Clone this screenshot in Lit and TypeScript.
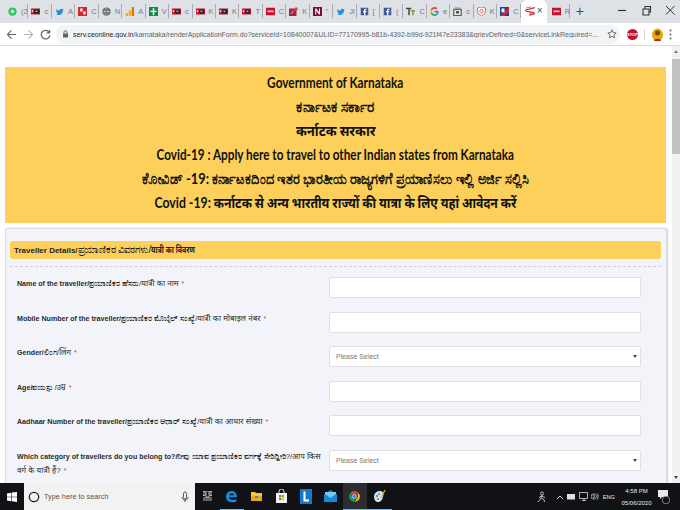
import { LitElement, html, css, svg } from 'lit';
import { customElement } from 'lit/decorators.js';

const toi = svg`<rect x="0" y="2" width="12" height="8" fill="#c8102e"/><rect x="4" y="3.500" width="7" height="5" fill="#222"/><rect x="1" y="4" width="2" height="3" fill="#f3c9c9"/><rect x="6" y="5" width="2.500" height="1.500" fill="#ddd"/>`;
const fb = svg`<rect x="1" y="1" width="10" height="10" fill="#3b5998"/><path d="M7 11V7h1.500l.3-1.600H7V4.500c0-.5.2-.8.8-.8h1V2.300H7.500C6 2.300 5.300 3.200 5.300 4.400v1H4V7h1.300v4z" fill="#fff"/>`;
const tw = svg`<path d="M11.500 3.200c-.4.200-.8.300-1.200.3.400-.3.800-.7.900-1.100-.4.200-.8.400-1.300.5C9.400 2.400 8.800 2.200 8.200 2.200c-1.200 0-2.100 1-2.100 2.100l.1.500C4.500 4.700 2.900 3.900 1.900 2.600c-.6 1-.3 2.200.6 2.800-.3 0-.7-.1-1-.3 0 1 .7 1.900 1.700 2.100-.3.100-.6.100-.9.100.3.800 1 1.400 2 1.400C3.500 9.400 2.400 9.800 1.300 9.700 5.200 12 10.600 10 10.600 4.600c.4-.3.700-.9.900-1.400z" fill="#1d8fe0"/>`;

const tabIcons: Record<string, unknown> = {
  wa: svg`<circle cx="6" cy="6" r="5.500" fill="#25c35c"/><circle cx="6" cy="6" r="2.600" fill="#bfeccd"/>`,
  toi,
  tw,
  dh: svg`<rect x="0" y="0" width="12" height="12" fill="#d6262c"/><path d="M3 2h3v4H3zM7 6h3v4H7z" fill="#fff"/>`,
  globe: svg`<circle cx="6" cy="6" r="5.500" fill="#5f6368"/><path d="M1 6h10M6 1c-3 3-3 7 0 10M6 1c3 3 3 7 0 10" stroke="#dee1e6" fill="none" stroke-width=".8"/>`,
  an: svg`<rect x="1" y="8" width="3" height="4" fill="#f9ab00"/><rect x="5" y="4.500" width="3" height="7.500" fill="#f9ab00"/><rect x="9" y="0" width="3" height="12" fill="#e37400"/>`,
  cr: svg`<rect x="0" y="0" width="12" height="12" fill="#128a45"/><path d="M5 1.500h2V5h3v1.800H7V11H5V6.800H2V5h3z" fill="#fff"/>`,
  tnm: svg`<rect x="0" y="1" width="12" height="10" fill="#c8102e"/><rect x="2" y="4.500" width="8" height="2.500" fill="#f3b9b9"/>`,
  pin: svg`<rect x="0" y="2" width="10" height="10" fill="#a5243a"/><circle cx="9.500" cy="2.500" r="2.300" fill="#e8453c"/><path d="M2.500 9l4-4" stroke="#fff"/>`,
  nn: svg`<rect x="0" y="0" width="12" height="12" fill="#7a1030"/><path d="M3 10V2h1.300L8 7V2h1.300v8H8L4.300 5v5z" fill="#fff"/>`,
  fb,
  tt: svg`<path d="M0 1h7v2H5v8H3V3H0z" fill="#4a4a3a"/><path d="M6.500 4H12v2h-1.700v5H8.300V6H6.500z" fill="#8a9a3a"/>`,
  g: svg`<path d="M11.500 6.200c0-.4 0-.8-.1-1.200H6v2.200h3.100c-.1.700-.5 1.300-1.100 1.700v1.400h1.800c1.100-1 1.700-2.500 1.700-4.100z" fill="#4285f4"/><path d="M6 12c1.500 0 2.800-.5 3.800-1.400L8 9.200c-.5.300-1.200.5-2 .5-1.500 0-2.700-1-3.200-2.300H.9v1.400C1.900 10.700 3.800 12 6 12z" fill="#34a853"/><path d="M2.800 7.400c-.2-.9-.2-1.800 0-2.700V3.300H.9c-.8 1.700-.8 3.800 0 5.500z" fill="#fbbc05"/><path d="M6 2.400c.9 0 1.600.3 2.200.8l1.600-1.600C8.800.7 7.500 0 6 0 3.800 0 1.900 1.300.9 3.300l1.900 1.400C3.300 3.400 4.500 2.400 6 2.400z" fill="#ea4335"/>`,
  box: svg`<rect x="1" y="3" width="10" height="8.500" fill="none" stroke="#4a4f2a" stroke-width="1.300"/><rect x="4" y="5.500" width="4" height="3" fill="#4a4f2a"/><path d="M4 0v3M8 0v3" stroke="#4a4f2a"/>`,
  sh: svg`<path d="M6 0l5.500 1.500L11 8l-5 4-5-4-.5-6.500z" fill="#fff" stroke="#e0453a"/><circle cx="6" cy="5.500" r="2.300" fill="none" stroke="#e0453a"/>`,
  rb: svg`<rect x="0" y="0" width="12" height="12" fill="#1d3f94"/><path d="M0 12L12 0v6L6 12z" fill="#d8232a"/><rect x="2" y="2" width="4" height="5" fill="#fff"/>`,
  s: svg`<path d="M12 2L2 4.500c-1.500.5-1 1.500 0 1.800L10 8c1.500.4 1.500 1.500 0 1.800L5 11" fill="none" stroke="#d8232a" stroke-width="1.500"/><path d="M1 2.500L8 1M5 8.500l3 .5" stroke="#d8232a" stroke-width=".8"/>`,
};

const tabs: [string, string][] = [
  ['wa', '(2'], ['toi', 'c'], ['tw', 'A'], ['dh', 'C'], ['globe', 'N'], ['an', 'A'], ['cr', 'V'],
  ['toi', 'c'], ['toi', 'K'], ['toi', 'K'], ['toi', 'T'], ['tnm', 'C'], ['pin', 'K'], ['nn', '"'],
  ['tw', 'Ji'], ['fb', '['], ['fb', '('], ['tt', 'C'], ['g', 'e'], ['box', 'c'], ['sh', 'K'], ['rb', 'C'],
];

// scale squeezes each line to the narrower face the original page uses
const bannerLines: { text: string; scale: number }[] = [
  { text: 'Government of Karnataka', scale: 0.79 },
  { text: 'ಕರ್ನಾಟಕ ಸರ್ಕಾರ', scale: 0.92 },
  { text: 'कर्नाटक सरकार', scale: 0.87 },
  { text: 'Covid-19 : Apply here to travel to other Indian states from Karnataka', scale: 0.783 },
  { text: 'ಕೋವಿಡ್ -19: ಕರ್ನಾಟಕದಿಂದ ಇತರ ಭಾರತೀಯ ರಾಜ್ಯಗಳಿಗೆ ಪ್ರಯಾಣಿಸಲು ಇಲ್ಲಿ ಅರ್ಜಿ ಸಲ್ಲಿಸಿ', scale: 0.86 },
  { text: 'Covid -19: कर्नाटक से अन्य भारतीय राज्यों की यात्रा के लिए यहां आवेदन करें', scale: 0.817 },
];

const fields: { en: string; kn: string; hi: string; kind: 'input' | 'select' }[] = [
  { en: 'Name of the traveller/', kn: 'ಪ್ರಯಾಣಿಕರ ಹೆಸರು/', hi: 'यात्री का नाम', kind: 'input' },
  { en: 'Mobile Number of the traveller/', kn: 'ಪ್ರಯಾಣಿಕರ ಮೊಬೈಲ್ ಸಂಖ್ಯೆ/', hi: 'यात्री का मोबाइल नंबर', kind: 'input' },
  { en: 'Gender/', kn: 'ಲಿಂಗ/', hi: 'लिंग', kind: 'select' },
  { en: 'Age/', kn: 'ವಯಸ್ಸು/', hi: 'उम्र', kind: 'input' },
  { en: 'Aadhaar Number of the traveller/', kn: 'ಪ್ರಯಾಣಿಕರ ಆಧಾರ್ ಸಂಖ್ಯೆ/', hi: 'यात्री का आधार संख्या', kind: 'input' },
  { en: 'Which category of travellers do you belong to?/', kn: 'ನೀವು ಯಾವ ಪ್ರಯಾಣಿಕರ ವರ್ಗಕ್ಕೆ ಸೇರಿದ್ದೀರಿ?/', hi: 'आप किस वर्ग के यात्री हैं?', kind: 'select' },
];

@customElement('app-root')
export class AppRoot extends LitElement {
  static styles = css`
    :host {
      display: flex;
      flex-direction: column;
      width: 680px;
      height: 510px;
      overflow: hidden;
      background: #fff;
      font-family: 'Liberation Sans', 'Noto Sans', sans-serif;
    }

    .tabbar {
      height: 23px;
      flex: none;
      display: flex;
      background: #dee1e6;
      padding-left: 5px;
      color: #777a80;
    }
    .tab {
      width: 23.45px;
      flex: none;
      box-sizing: border-box;
      padding: 3px 0 0 3px;
      display: flex;
      gap: 4px;
      font-size: 7.500px;
      line-height: 9px;
      border-right: 1px solid #a9adb3;
      height: 14px;
      margin-top: 4px;
    }
    .tab svg { flex: none; width: 9px; height: 9px; margin-top: 0; }
    .tab.active {
      background: #fff;
      border: 0;
      height: 23px;
      margin-top: 0;
      width: 26px;
      padding: 6px 0 0 4px;
      border-radius: 6px 6px 0 0;
      gap: 2px;
      color: #444;
      font-size: 10px;
    }
    .tab.active svg { width: 10px; height: 10px; }
    .tab.last { margin-left: 2px; width: 21px; }
    .plus { margin-left: 6px; padding-top: 3px; font-size: 14px; line-height: 16px; color: #45484d; }
    .winctl { margin-left: auto; display: flex; gap: 11px; padding: 4px 3px 0 0; }
    .winctl svg { width: 13px; height: 13px; }

    .toolbar {
      height: 23px;
      flex: none;
      box-sizing: border-box;
      display: flex;
      align-items: center;
      background: #fff;
      border-bottom: 1px solid #dadce0;
      padding: 0 6px;
    }
    .toolbar svg { flex: none; }
    .nav { display: flex; gap: 6px; }
    .omnibox {
      margin-left: 5px;
      width: 564px;
      height: 19px;
      box-sizing: border-box;
      border-radius: 10px;
      background: #f1f3f4;
      display: flex;
      align-items: center;
      padding: 0 3px 0 6px;
      gap: 4px;
      font-size: 6.950px;
      color: #5f6368;
      white-space: nowrap;
      overflow: hidden;
    }
    .url { flex: 1; overflow: hidden; }
    .url b { font-weight: 400; color: #202124; }
    .tools { display: flex; align-items: center; margin-left: 7px; gap: 5px; }
    .tools .sep { width: 1px; height: 11px; background: #d5d7da; margin: 0 1px; }
    .stop {
      width: 11px; height: 11px; border-radius: 50%;
      background: #c8102e; color: #fff;
      font-size: 4px; font-weight: 700; text-align: center; line-height: 11px;
    }

    .viewport { flex: 1; min-height: 0; display: flex; overflow: hidden; }
    .page {
      flex: 1;
      min-width: 0;
      box-sizing: border-box;
      padding: 21px 5px 0 5px;
      display: flex;
      flex-direction: column;
      gap: 5px;
    }
    .banner {
      flex: none;
      height: 156px;
      margin-right: 1px;
      box-sizing: border-box;
      background: #fdd05b;
      color: #111;
      font-family: Lato, 'Noto Sans', sans-serif;
      font-weight: 700;
      text-align: center;
      padding-top: 3px;
      font-size: 15px;
      line-height: 24px;
    }
    .banner div { height: 24px; white-space: nowrap; }
    .banner span { display: inline-block; }

    .card {
      flex: 1;
      background: #f3f4f9;
      border: 1px solid #dcdde0;
      border-bottom: 0;
      border-radius: 3px 3px 0 0;
      box-shadow: 1px 0 2px #cfd0d4;
      padding: 12px 5px 0 4px;
    }
    .head {
      height: 18px;
      background: #fdd05b;
      border-radius: 3px;
      padding-left: 4px;
      font-size: 8px;
      font-weight: 700;
      line-height: 18px;
      color: #222;
      white-space: nowrap;
    }
    .head .kn { font-size: 10.400px; font-weight: 400; }
    .head .hi {
      display: inline-block;
      font-size: 9.500px;
      transform: scaleX(0.74);
      transform-origin: left center;
    }
    .rule { border-top: 1px dashed #cfd0d4; margin-top: 7px; }
    .rows {
      display: flex;
      flex-direction: column;
      gap: 13.500px;
      padding: 10px 25px 0 7px;
    }
    .row {
      display: grid;
      grid-template-columns: 312px 312px;
      height: 21px;
    }
    .row label {
      font-size: 7.100px;
      font-weight: 700;
      line-height: 13px;
      color: #2a2a2a;
      padding-right: 3px;
    }
    .row .kn { font-size: 7.500px; font-weight: 400; }
    .row .hi { font-size: 8px; font-weight: 400; }
    .req { color: #e33; margin-left: 3px; font-weight: 400; }
    .control {
      box-sizing: border-box;
      height: 21px;
      background: #fff;
      border: 1px solid #dfe0e3;
      border-radius: 2px;
      position: relative;
      display: flex;
      align-items: center;
      padding-left: 6px;
      font-size: 7px;
      color: #777;
    }
    .control.select::after {
      content: '';
      position: absolute;
      right: 3px;
      top: 8px;
      border: 2px solid transparent;
      border-top: 3px solid #444;
    }

    .scrollbar {
      width: 8px;
      flex: none;
      background: #f1f1f1;
      display: flex;
      flex-direction: column;
      align-items: center;
    }
    .thumb { width: 100%; height: 95px; background: #c1c1c1; margin-top: 6px; margin-bottom: auto; }
    .arrow-up, .arrow-down { border: 2.500px solid transparent; width: 0; height: 0; flex: none; }
    .arrow-up { border-bottom: 3px solid #777; margin-top: 2px; }
    .arrow-down { border-top: 3px solid #444; margin-bottom: 2px; }

    .taskbar {
      height: 27px;
      flex: none;
      background: #101216;
      display: flex;
      align-items: stretch;
      color: #e8e8e8;
    }
    .start { width: 24px; display: flex; align-items: center; justify-content: center; flex: none; }
    .search {
      width: 171px;
      flex: none;
      background: #f2f2f2;
      color: #555;
      display: flex;
      align-items: center;
      padding-left: 4px;
      box-sizing: border-box;
      font-size: 7.300px;
      gap: 4px;
    }
    .search span { flex: 1; }
    .search svg:last-child { margin-right: 6px; }
    .apps { display: flex; }
    .app {
      width: 24.600px;
      display: flex;
      align-items: center;
      justify-content: center;
      box-sizing: border-box;
      border-bottom: 1px solid transparent;
    }
    .app.open { border-bottom-color: #76b9ed; }
    .app.current { background: #2b2d31; }
    .tray {
      margin-left: auto;
      display: flex;
      align-items: center;
      gap: 3.500px;
      padding-right: 10px;
      font-size: 5.600px;
    }
    .tray .caret { margin-left: 6px; }
    .clock { text-align: center; font-size: 6px; line-height: 12px; margin-left: 3px; margin-right: 3px; }
  `;

  render() {
    return html`
      <div class="tabbar">
        ${tabs.map(([icon, text]) => html`<div class="tab">
          <svg viewBox="0 0 12 12">${tabIcons[icon]}</svg><span>${text}</span>
        </div>`)}
        <div class="tab active"><svg viewBox="0 0 12 12">${tabIcons.s}</svg><span>×</span></div>
        <div class="tab last"><svg viewBox="0 0 12 12">${tabIcons.tnm}</svg><span>R</span></div>
        <div class="plus">+</div>
        <div class="winctl">
          <svg viewBox="0 0 13 13"><path d="M2 6.500h8" stroke="#333" stroke-width="1.200"/></svg>
          <svg viewBox="0 0 13 13"><path d="M3 5h6v6H3zM5 5V2.500h5.500V8H9" fill="none" stroke="#333" stroke-width="1.100"/></svg>
          <svg viewBox="0 0 13 13"><path d="M2 2l8.500 8.500M10.500 2L2 10.500" stroke="#333" stroke-width="1"/></svg>
        </div>
      </div>

      <div class="toolbar">
        <div class="nav">
          <svg width="11" height="11" viewBox="0 0 12 12"><path d="M11 6H2M6 1.500L1.500 6 6 10.500" fill="none" stroke="#5f6368" stroke-width="1.200"/></svg>
          <svg width="11" height="11" viewBox="0 0 12 12"><path d="M1 6h9M6 1.500L10.500 6 6 10.500" fill="none" stroke="#b0b3b8" stroke-width="1.200"/></svg>
          <svg width="11" height="11" viewBox="0 0 12 12"><path d="M10 3.500A4.700 4.700 0 1 0 10.700 7M10.500 1v3.300H7.200" fill="none" stroke="#5f6368" stroke-width="1.300"/></svg>
        </div>
        <div class="omnibox">
          <svg width="7" height="8" viewBox="0 0 7 8"><rect x="1" y="3.500" width="5" height="4" fill="#5f6368"/><path d="M2 3.500V2.300a1.500 1.500 0 0 1 3 0v1.200" fill="none" stroke="#5f6368"/></svg>
          <span class="url"><b>serv.ceonline.gov.in</b>/karnataka/renderApplicationForm.do?serviceId=10840007&amp;ULID=77170995-b81b-4392-b99d-921f47e23383&amp;grievDefined=0&amp;serviceLinkRequired=...</span>
          <svg width="10" height="10" viewBox="0 0 12 12"><path d="M6 1l1.500 3.300 3.500.4-2.600 2.400.7 3.500L6 8.800l-3.100 1.800.7-3.500L1 4.700l3.500-.4z" fill="none" stroke="#5f6368" stroke-width="1.100"/></svg>
        </div>
        <div class="tools">
          <div class="stop">STOP</div>
          <div class="sep"></div>
          <svg width="13" height="15" viewBox="0 0 13 15"><ellipse cx="6.500" cy="8" rx="5.500" ry="6.500" fill="#e2a90f"/><circle cx="6.500" cy="6" r="2.500" fill="#7a4a12"/><path d="M3 14c0-3 7-3 7 0" fill="#b3261e"/></svg>
          <svg width="3" height="11" viewBox="0 0 3 11"><circle cx="1.500" cy="1.500" r="1" fill="#5f6368"/><circle cx="1.500" cy="5.500" r="1" fill="#5f6368"/><circle cx="1.500" cy="9.500" r="1" fill="#5f6368"/></svg>
        </div>
      </div>

      <div class="viewport">
        <div class="page">
          <div class="banner">
            ${bannerLines.map((l) => html`<div><span style="transform: scaleX(${l.scale})">${l.text}</span></div>`)}
          </div>
          <div class="card">
            <div class="head">Traveller Details/<span class="kn">ಪ್ರಯಾಣಿಕರ ವಿವರಗಳು/</span><span class="hi">यात्री का विवरण</span></div>
            <div class="rule"></div>
            <div class="rows">
              ${fields.map((f) => html`<div class="row">
                <label>${f.en}<span class="kn">${f.kn}</span><span class="hi">${f.hi}</span><span class="req">*</span></label>
                ${f.kind === 'select'
                  ? html`<div class="control select">Please Select</div>`
                  : html`<div class="control"></div>`}
              </div>`)}
            </div>
          </div>
        </div>
        <div class="scrollbar">
          <div class="arrow-up"></div>
          <div class="thumb"></div>
          <div class="arrow-down"></div>
        </div>
      </div>

      <div class="taskbar">
        <div class="start">
          <svg width="10" height="10" viewBox="0 0 10 10"><path d="M0 1.400l4.400-.7v4H0zM5 .6L10 0v4.700H5zM0 5.300h4.400v4L0 8.600zM5 5.300h5V10l-5-.7z" fill="#fff"/></svg>
        </div>
        <div class="search">
          <svg width="12" height="12" viewBox="0 0 12 12"><circle cx="6" cy="6" r="4.700" fill="none" stroke="#222" stroke-width="1.300"/></svg>
          <span>Type here to search</span>
          <svg width="8" height="12" viewBox="0 0 8 12"><rect x="2.500" y="1" width="3" height="7" rx="1.500" fill="none" stroke="#555"/><path d="M1 6c0 4 6 4 6 0M4 9v2" fill="none" stroke="#555"/></svg>
        </div>
        <div class="apps">
          <div class="app">
            <svg width="9" height="10" viewBox="0 0 9 10"><path d="M0 .5h2v4H0zM7 .5h2v4H7zM3 0h3v6H3zM0 7h9M0 9h9" fill="none" stroke="#ddd" stroke-width=".8"/></svg>
          </div>
          <div class="app open">
            <svg width="13" height="13" viewBox="0 0 13 13"><path d="M1 7C1 3 3.500 1 6.800 1 10 1 12 3.500 12 7.300H4c.1 3 4.500 3.500 7.300 1.700v2.500C7 13.500 1 12 1 7zM4.200 5.300H9c0-2.400-4.300-2.400-4.800 0z" fill="#1a8ce0"/></svg>
          </div>
          <div class="app">
            <svg width="13" height="12" viewBox="0 0 13 12"><path d="M1 2h4l1 1h6v8H1z" fill="#f5c542"/><rect x="1" y="6" width="11" height="5" fill="#e8a91c"/><rect x="5" y="6" width="3" height="2" fill="#3a8ed8"/></svg>
          </div>
          <div class="app">
            <svg width="13" height="14" viewBox="0 0 13 14"><rect x="1" y="4" width="11" height="10" fill="#f4f4f4"/><path d="M4 4V2.500a2.500 2.500 0 0 1 5 0V4" fill="none" stroke="#eee"/><rect x="4" y="6" width="2.300" height="2.300" fill="#f25022"/><rect x="6.800" y="6" width="2.300" height="2.300" fill="#7fba00"/><rect x="4" y="8.800" width="2.300" height="2.300" fill="#00a4ef"/><rect x="6.800" y="8.800" width="2.300" height="2.300" fill="#ffb900"/></svg>
          </div>
          <div class="app">
            <svg width="12" height="15" viewBox="0 0 12 15"><rect width="12" height="15" fill="#1878c8"/><path d="M3.500 2.500h2V10.500h3.500v2H3.500z" fill="#fff"/></svg>
          </div>
          <div class="app">
            <svg width="13" height="12" viewBox="0 0 13 12"><path d="M6.500 0L13 4.500V12H0V4.500z" fill="#1a86d8"/><path d="M1 4l5.500 4L12 4V2H1z" fill="#7cc4f2"/></svg>
          </div>
          <div class="app open current">
            <svg width="13" height="13" viewBox="0 0 48 48"><path d="M24 4a20 20 0 0 1 17.300 10H24a10 10 0 0 0-9.500 7L7.900 12A20 20 0 0 1 24 4z" fill="#db4437"/><path d="M41.300 14A20 20 0 0 1 25 44l8-14a10 10 0 0 0 0-16z" fill="#fbbc05"/><path d="M25 44A20 20 0 0 1 7.900 12l8.500 15a10 10 0 0 0 9.600 7z" fill="#0f9d58"/><circle cx="24" cy="24" r="8" fill="#4285f4" stroke="#fff" stroke-width="2"/></svg>
          </div>
          <div class="app open">
            <svg width="13" height="14" viewBox="0 0 13 14"><path d="M1 8c0-4 3-6 6-6 3 0 4 3 3 6-1 4-3 5-5 5S1 11 1 8z" fill="#cfe5f5"/><circle cx="4" cy="7" r="1" fill="#e03c31"/><circle cx="6" cy="5" r="1" fill="#3a8ed8"/><circle cx="5" cy="10" r="1" fill="#3fa34d"/><path d="M8 9l4-8" stroke="#e8a91c" stroke-width="1.300"/></svg>
          </div>
        </div>
        <div class="tray">
          <svg width="9" height="12" viewBox="0 0 9 12"><circle cx="5" cy="2.500" r="1.500" fill="none" stroke="#ddd" stroke-width=".8"/><path d="M5 4L3.500 8 1 11M4 7l3 1.500.5 2.500M4.500 5L8 6.500M4.500 5L2 6.500" fill="none" stroke="#ddd" stroke-width=".8"/></svg>
          <svg class="caret" width="8" height="6" viewBox="0 0 8 6"><path d="M1 5l3-3 3 3" fill="none" stroke="#ddd"/></svg>
          <svg width="8" height="7" viewBox="0 0 8 7"><rect x="0" y="1" width="8" height="5.500" fill="#ddd"/></svg>
          <svg width="9" height="9" viewBox="0 0 9 9"><path d="M.5.500h8v6h-8zM3 8.500h4M5 6.500v2" fill="none" stroke="#ddd" stroke-width=".8"/></svg>
          <svg width="8" height="9" viewBox="0 0 8 9"><path d="M0 3h1.500L3 1.500v6L1.500 6H0zM4.500 2.500c1 1 1 3 0 4M6 1.500c1.500 1.500 1.500 4.500 0 6" fill="none" stroke="#ddd" stroke-width=".8"/></svg>
          <span>ENG</span>
          <div class="clock">4:58 PM<br />05/06/2020</div>
          <svg width="12" height="14" viewBox="0 0 12 14"><path d="M0 0h10v7H4L2 9V7H0z" fill="#e8e8e8"/><circle cx="8" cy="10" r="3.800" fill="#101216" stroke="#aaa" stroke-width=".7"/></svg>
        </div>
      </div>
    `;
  }
}
